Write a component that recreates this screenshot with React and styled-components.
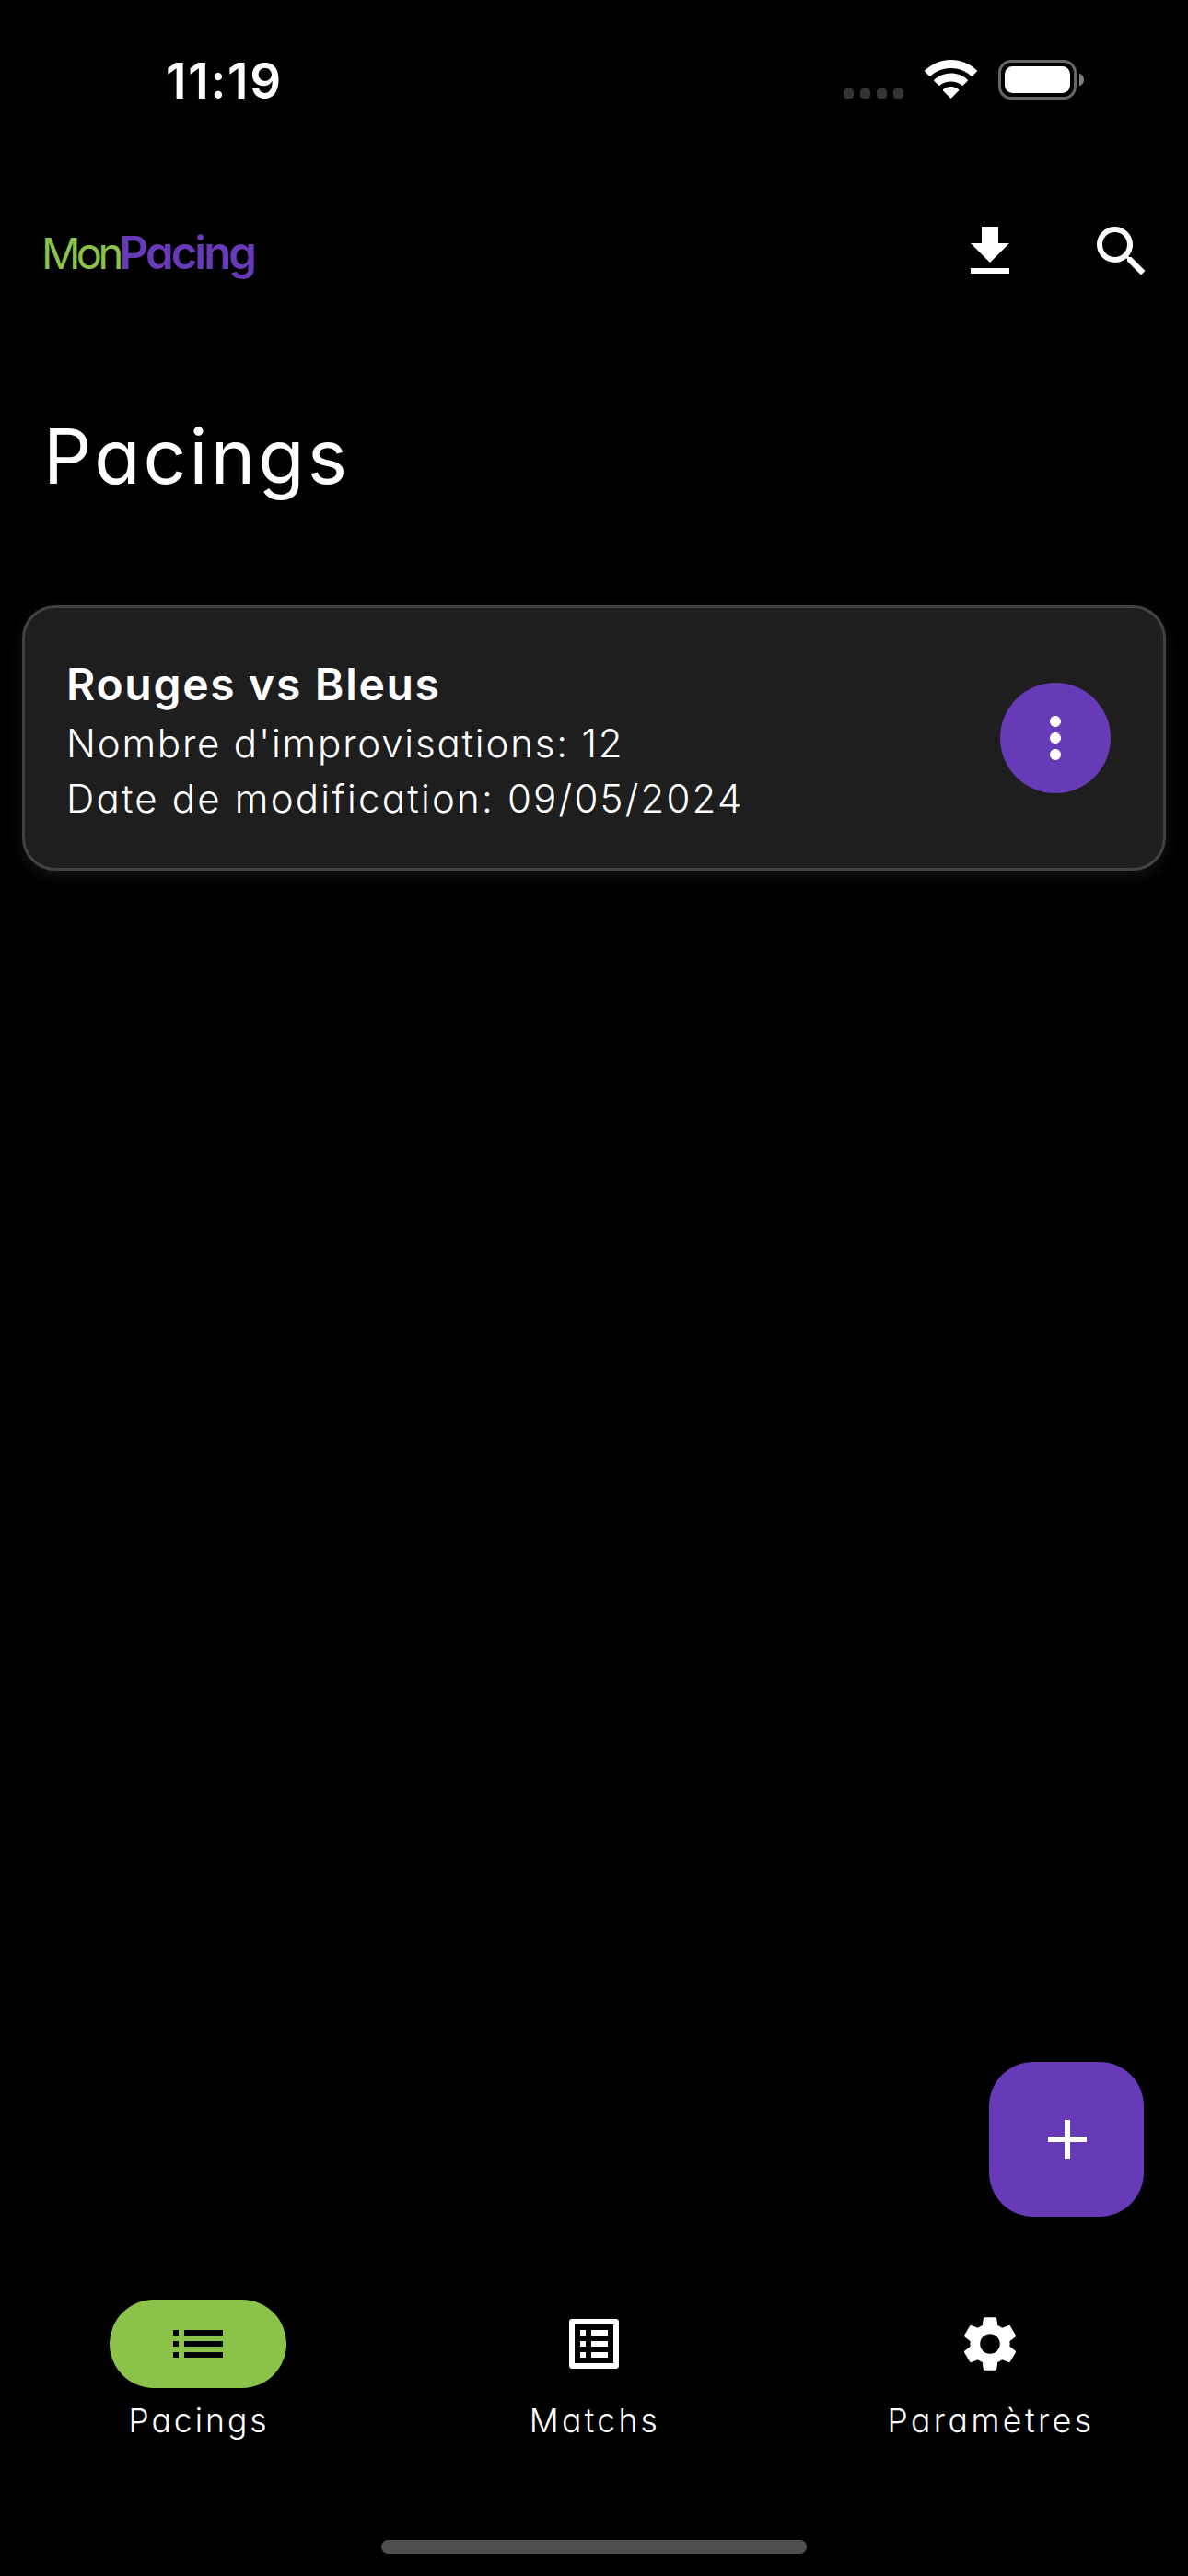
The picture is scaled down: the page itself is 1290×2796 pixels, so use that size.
import React from "react";
import styled, { createGlobalStyle } from "styled-components";
import {
  MdFileDownload,
  MdSearch,
  MdMoreVert,
  MdAdd,
  MdList,
  MdListAlt,
  MdSettings,
} from "react-icons/md";

const GlobalStyle = createGlobalStyle`
  *, *::before, *::after { box-sizing: border-box; }
  html, body { margin: 0; background: #000; }
  button { border: 0; padding: 0; margin: 0; background: none; color: inherit; font: inherit; }
`;

const Screen = styled.div`
  display: flex;
  flex-direction: column;
  width: 1290px;
  height: 2796px;
  background: #000;
  color: #fff;
  font-family: Inter, "Open Sans", sans-serif;
  font-feature-settings: "cv11" 1;
  overflow: hidden;
`;

const StatusBar = styled.div`
  display: flex;
  align-items: center;
  justify-content: space-between;
  height: 174px;
  padding: 0 112px 0 180px;
`;

const Clock = styled.time`
  padding-top: 2px;
  font-size: 53px;
  font-weight: 600;
  line-height: 64px;
  letter-spacing: 1.8px;
`;

const StatusIcons = styled.div`
  display: flex;
  align-items: flex-end;
  padding-bottom: 1px;
`;

const SignalDots = styled.div`
  display: flex;
  gap: 7px;
  margin: 0 23px 1px 0;
`;

const Dot = styled.i`
  width: 11px;
  height: 11px;
  border-radius: 4px;
  background: #333;
`;

const WifiSlot = styled.span`
  display: flex;
  margin: 0 23px 1px 0;
`;

const AppBar = styled.header`
  display: flex;
  align-items: center;
  justify-content: space-between;
  height: 198px;
  padding: 0 36px 0 45px;
`;

const Logo = styled.div`
  display: flex;
  align-items: baseline;
  padding-top: 4px;
  font-size: 47px;
  line-height: 60px;
`;

const LogoThin = styled.span`
  color: #8bc34a;
  font-weight: 400;
  letter-spacing: -4.6px;
`;

const LogoBold = styled.span`
  color: #673ab7;
  font-weight: 600;
  font-size: 49px;
  letter-spacing: -2.9px;
`;

const Actions = styled.div`
  display: flex;
  gap: 71px;
`;

const IconButton = styled.button`
  display: flex;
  width: 72px;
  height: 72px;
  font-size: 72px;
`;

const PageTitle = styled.h1`
  margin: 0;
  padding: 0 47px 38px;
  font-size: 82px;
  font-weight: 400;
  line-height: 247px;
  letter-spacing: 3.2px;
`;

const Card = styled.article`
  display: flex;
  align-items: center;
  justify-content: space-between;
  height: 288px;
  margin: 0 24px;
  padding: 0 57px 0 45px;
  border: 3px solid #424242;
  border-radius: 36px;
  background: #1e1e1e;
  box-shadow: 0 6px 16px rgba(255, 255, 255, 0.08);
`;

const CardText = styled.div`
  align-self: flex-start;
  padding-top: 50px;
`;

const CardTitle = styled.h2`
  margin: 0 0 1px;
  font-size: 48px;
  font-weight: 600;
  line-height: 66px;
  letter-spacing: 1.7px;
`;

const CardLine = styled.p`
  margin: 0;
  font-size: 42px;
  font-weight: 350;
  line-height: 60px;
  letter-spacing: ${(p) => p.$spacing}px;
`;

const MenuButton = styled.button`
  display: flex;
  align-items: center;
  justify-content: center;
  width: 120px;
  height: 120px;
  border-radius: 50%;
  background: #673ab7;
  font-size: 72px;
`;

const Content = styled.main`
  display: flex;
  flex-direction: column;
  flex: 1;
`;

const AddButton = styled.button`
  display: flex;
  align-items: center;
  justify-content: center;
  align-self: flex-end;
  width: 168px;
  height: 168px;
  margin: auto 48px 48px 0;
  padding-left: 2px;
  border-radius: 48px;
  background: #673ab7;
  font-size: 72px;
`;

const NavBar = styled.nav`
  display: grid;
  grid-template-columns: repeat(3, 1fr);
  height: 303px;
  padding-top: 42px;
`;

const NavItem = styled.a`
  display: flex;
  flex-direction: column;
  align-items: center;
`;

const NavPill = styled.span`
  display: flex;
  align-items: center;
  justify-content: center;
  width: 192px;
  height: 96px;
  border-radius: 48px;
  font-size: 72px;
  background: ${(p) => (p.$active ? "#8bc34a" : "transparent")};
  color: ${(p) => (p.$active ? "#000" : "#fff")};
`;

const NavLabel = styled.span`
  margin-top: 10px;
  padding-left: 2px;
  font-size: 35.5px;
  font-weight: 350;
  line-height: 51px;
  letter-spacing: ${(p) => p.$spacing}px;
`;

const HomeIndicator = styled.div`
  width: 462px;
  height: 15px;
  margin: 0 auto 24px;
  border-radius: 8px;
  background: #4f4f4f;
`;

function WifiIcon() {
  return (
    <svg width="57" height="42" viewBox="0 0 57 42" fill="#fff">
      <path d="M28.5 0C39.4 0 49.3 4.3 56.6 11.3Q57.3 12 56.6 12.8L52 17.4Q51.3 18.1 50.5 17.4C44.8 12 37 8.9 28.5 8.9S12.2 12 6.5 17.4Q5.7 18.1 5 17.4L.4 12.8Q-.3 12 .4 11.3C7.7 4.3 17.6 0 28.5 0Z" />
      <path d="M28.5 14.6C35.4 14.6 41.7 17.2 46.5 21.4Q47.3 22.1 46.6 22.9L41.9 27.6Q41.2 28.3 40.3 27.6C37.1 25 33 23.5 28.5 23.5S19.9 25 16.7 27.6Q15.8 28.3 15.1 27.6L10.4 22.9Q9.7 22.1 10.5 21.4C15.3 17.2 21.6 14.6 28.5 14.6Z" />
      <path d="M28.5 29C31.6 29 34.5 30.1 36.8 31.9Q37.6 32.6 36.9 33.4L29.3 41.3Q28.5 42.1 27.7 41.3L20.1 33.4Q19.4 32.6 20.2 31.9C22.5 30.1 25.4 29 28.5 29Z" />
    </svg>
  );
}

function BatteryIcon() {
  return (
    <svg width="94" height="43" viewBox="0 0 94 43">
      <rect x="1.5" y="1.5" width="82" height="40" rx="12.5" fill="none" stroke="#666" strokeWidth="3" />
      <rect x="7" y="7" width="71" height="29" rx="8.5" fill="#fff" />
      <path d="M88 14.5C91.2 15.7 93 18.4 93 21.5S91.2 27.3 88 28.5Z" fill="#808080" />
    </svg>
  );
}

const tabs = [
  { label: "Pacings", Icon: MdList, spacing: 3, active: true },
  { label: "Matchs", Icon: MdListAlt, spacing: 3.3 },
  { label: "Paramètres", Icon: MdSettings, spacing: 3.5 },
];

export default function App() {
  return (
    <Screen>
      <GlobalStyle />
      <StatusBar>
        <Clock>11:19</Clock>
        <StatusIcons>
          <SignalDots>
            <Dot />
            <Dot />
            <Dot />
            <Dot />
          </SignalDots>
          <WifiSlot>
            <WifiIcon />
          </WifiSlot>
          <BatteryIcon />
        </StatusIcons>
      </StatusBar>
      <AppBar>
        <Logo>
          <LogoThin>Mon</LogoThin>
          <LogoBold>Pacing</LogoBold>
        </Logo>
        <Actions>
          <IconButton aria-label="Importer">
            <MdFileDownload />
          </IconButton>
          <IconButton aria-label="Rechercher">
            <MdSearch />
          </IconButton>
        </Actions>
      </AppBar>
      <Content>
        <PageTitle>Pacings</PageTitle>
        <Card>
          <CardText>
            <CardTitle>Rouges vs Bleus</CardTitle>
            <CardLine $spacing={1.8}>Nombre d'improvisations: 12</CardLine>
            <CardLine $spacing={2.2}>Date de modification: 09/05/2024</CardLine>
          </CardText>
          <MenuButton aria-label="Options">
            <MdMoreVert />
          </MenuButton>
        </Card>
        <AddButton aria-label="Ajouter">
          <MdAdd />
        </AddButton>
      </Content>
      <NavBar>
        {tabs.map(({ label, Icon, spacing, active }) => (
          <NavItem key={label}>
            <NavPill $active={active}>
              <Icon />
            </NavPill>
            <NavLabel $spacing={spacing}>{label}</NavLabel>
          </NavItem>
        ))}
      </NavBar>
      <HomeIndicator />
    </Screen>
  );
}
